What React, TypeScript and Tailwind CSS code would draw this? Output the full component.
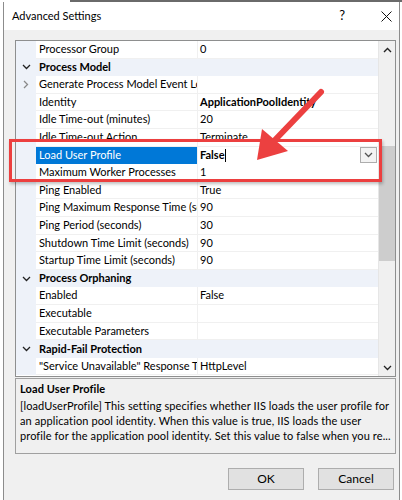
import React from 'react';

type Row = {
  name: string;
  value?: string;
  cat?: boolean;
  bold?: boolean;
  expander?: boolean;
  selected?: boolean;
};

const ROWS: Row[] = [
  { name: 'Processor Group', value: '0' },
  { name: 'Process Model', cat: true },
  { name: 'Generate Process Model Event Log', value: '', expander: true },
  { name: 'Identity', value: 'ApplicationPoolIdentity', bold: true },
  { name: 'Idle Time-out (minutes)', value: '20' },
  { name: 'Idle Time-out Action', value: 'Terminate' },
  { name: 'Load User Profile', value: 'False', selected: true },
  { name: 'Maximum Worker Processes', value: '1' },
  { name: 'Ping Enabled', value: 'True' },
  { name: 'Ping Maximum Response Time (seconds)', value: '90' },
  { name: 'Ping Period (seconds)', value: '30' },
  { name: 'Shutdown Time Limit (seconds)', value: '90' },
  { name: 'Startup Time Limit (seconds)', value: '90' },
  { name: 'Process Orphaning', cat: true },
  { name: 'Enabled', value: 'False' },
  { name: 'Executable', value: '' },
  { name: 'Executable Parameters', value: '' },
  { name: 'Rapid-Fail Protection', cat: true },
  { name: '"Service Unavailable" Response Type', value: 'HttpLevel' },
];

function ChevDown({ color = '#222' }: { color?: string }) {
  return (
    <svg width="9" height="6" viewBox="0 0 9 6">
      <polyline points="1,1 4.5,4.5 8,1" fill="none" stroke={color} strokeWidth="1.3" />
    </svg>
  );
}

function ChevUp() {
  return (
    <svg width="9" height="6" viewBox="0 0 9 6">
      <polyline points="1,5 4.5,1.5 8,5" fill="none" stroke="#222" strokeWidth="1.4" />
    </svg>
  );
}

function ChevRight() {
  return (
    <svg width="6" height="9" viewBox="0 0 6 9">
      <polyline points="1,1 4.5,4.5 1,8" fill="none" stroke="#8a8a8a" strokeWidth="1.3" />
    </svg>
  );
}

function GridRow({ row }: { row: Row }) {
  if (row.cat) {
    return (
      <div className="flex h-[17.6px] bg-[#eef2f9]">
        <div className="w-[20px] flex items-center justify-center">
          <ChevDown />
        </div>
        <div className="flex-1 pl-[3px] flex items-center font-bold whitespace-nowrap">{row.name}</div>
      </div>
    );
  }
  return (
    <div className="flex h-[17.6px]">
      <div className="w-[20px] bg-[#eef2f9] flex items-center justify-center">
        {row.expander && <ChevRight />}
      </div>
      <div
        className={
          row.selected
            ? 'w-[161px] pl-[3px] flex items-center overflow-hidden whitespace-nowrap bg-[#0078d7] text-white'
            : 'w-[161px] pl-[3px] flex items-center overflow-hidden whitespace-nowrap border-b border-[#f0f0f0]'
        }
      >
        {row.name}
      </div>
      <div className="w-px bg-[#f0f0f0]" />
      {row.selected ? (
        <div className="flex-1 flex items-center pl-[2px] pr-[1px] bg-white">
          <span className="font-bold">{row.value}</span>
          <span className="w-px h-[13px] bg-black" />
          <div className="ml-auto w-[17px] h-[16px] border border-[#adadad] bg-[#f3f3f3] flex items-center justify-center">
            <ChevDown color="#555" />
          </div>
        </div>
      ) : (
        <div className="flex-1 flex items-center pl-[2px] border-b border-[#f0f0f0] whitespace-nowrap overflow-hidden">
          <span className={row.bold ? 'font-bold' : ''}>{row.value}</span>
        </div>
      )}
    </div>
  );
}

export default function App() {
  return (
    <div className="relative w-[402px] h-[500px] overflow-hidden bg-white text-black text-[11px] font-['Lato',sans-serif]">
      <div className="h-[2px] bg-[#6a6a6a] ml-[70px]" />
      <div className="ml-[3px] mr-[2px] h-[498px] border-l border-r border-[#8c8c8c] flex flex-col">
        {/* Title bar */}
        <div className="h-[28px] bg-white flex items-center pl-[8px]">
          <span className="text-[11px]">Advanced Settings</span>
          <span className="ml-auto mr-[36px] text-[13px]">?</span>
          <svg width="11" height="11" viewBox="0 0 11 11" className="mr-[7px]">
            <path d="M0.5 0.5 L10.5 10.5 M10.5 0.5 L0.5 10.5" stroke="#111" strokeWidth="1" />
          </svg>
        </div>

        {/* Body */}
        <div className="flex-1 bg-[#f0f0f0] flex flex-col pl-[11px] pr-[3px] pt-[10px]">
          {/* Property grid */}
          <div className="w-[381px] h-[337px] border border-[#8e8f8f] bg-white flex">
            <div className="w-[362px] flex flex-col">
              {ROWS.map((r) => (
                <GridRow key={r.name} row={r} />
              ))}
            </div>
            <div className="flex-1 bg-[#f0f0f0] flex flex-col items-center border-l border-[#e6e6e6]">
              <div className="h-[17px] flex items-center justify-center">
                <ChevUp />
              </div>
              <div className="h-[88px]" />
              <div className="w-full h-[115px] bg-[#cdcdcd]" />
              <div className="flex-1" />
              <div className="h-[17px] flex items-center justify-center">
                <ChevDown />
              </div>
            </div>
          </div>

          {/* Description */}
          <div className="mt-[1px] w-[381px] h-[76px] border border-[#a0a0a0] px-[4px] pt-[2px] leading-[15px] whitespace-nowrap tracking-[0.1px]">
            <div className="font-bold mb-[2px]">Load User Profile</div>
            <div>[loadUserProfile] This setting specifies whether IIS loads the user profile for</div>
            <div>an application pool identity. When this value is true, IIS loads the user</div>
            <div>profile for the application pool identity. Set this value to false when you re...</div>
          </div>

          {/* Buttons */}
          <div className="mt-[14px] flex justify-end gap-[14px] pr-[2px] w-[381px]">
            <button className="w-[76px] h-[22px] bg-[#e1e1e1] border border-[#adadad] text-[12px]">OK</button>
            <button className="w-[76px] h-[22px] bg-[#e1e1e1] border border-[#adadad] text-[12px]">Cancel</button>
          </div>
        </div>
      </div>

      {/* Annotation box */}
      <div className="absolute left-[9px] top-[139px] w-[373px] h-[43px] border-[3px] border-[#ec3f3f] shadow-[1px_2px_3px_rgba(0,0,0,0.25)] pointer-events-none" />

      {/* Annotation arrow */}
      <svg className="absolute left-0 top-0 pointer-events-none" width="402" height="500" viewBox="0 0 402 500">
        <line x1="321" y1="92" x2="274" y2="141" stroke="#ec4040" strokeWidth="6" strokeLinecap="round" />
        <polygon points="257,160 262,129 288,151" fill="#ec4040" />
      </svg>
    </div>
  );
}
